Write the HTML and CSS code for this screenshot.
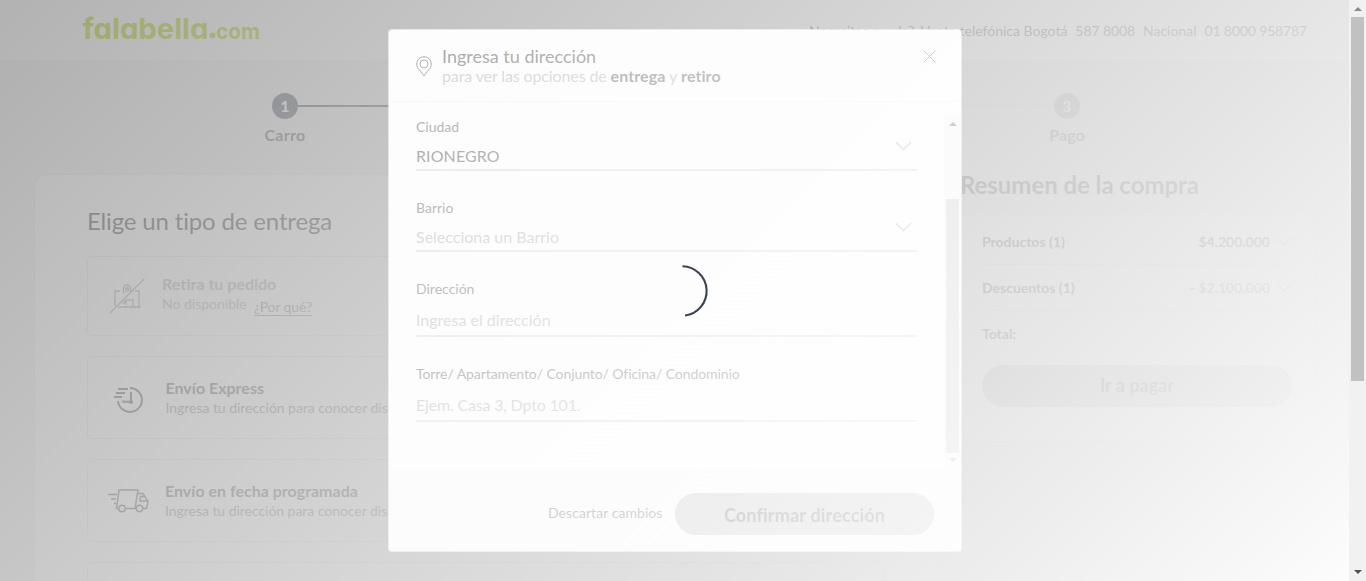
FILE: index.html
```html
<!DOCTYPE html>
<html lang="es">
<head>
<meta charset="utf-8">
<title>falabella.com</title>
<link rel="stylesheet" href="styles.css">
</head>
<body>
<div class="viewport">
  <header class="topbar">
    <svg class="logo" width="180" height="32" viewBox="0 0 180 32">
      <text class="logo-main" x="0.500" y="24.700" textLength="126" lengthAdjust="spacingAndGlyphs">falabella</text>
      <circle cx="130.500" cy="21.500" r="3"/>
      <text class="logo-com" x="134" y="24.700" textLength="44" lengthAdjust="spacingAndGlyphs">com</text>
    </svg>
    <div class="help"><span class="ask">¿Necesitas ayuda?</span><span class="tel">Venta telefónica Bogotá</span><b class="n1">587 8008</b><span class="nac">Nacional</span><b class="n2">01 8000 958787</b></div>
  </header>
  <div class="steps">
    <div class="step"><i>1</i><span>Carro</span></div>
    <div class="track"></div>
    <div class="track next"></div>
    <div class="step off"><i>3</i><span>Pago</span></div>
  </div>
  <div class="columns">
    <main class="delivery">
      <h1><span>Elige un tipo de entrega</span></h1>
      <section class="option off">
        <svg class="ic-store" width="36" height="36" viewBox="0 0 36 36"><path d="M11 13H6v15M9 29h23M26 13h4v16M14 26l3-4h7v7M17 22v5M15 15c-2-4 0-8 3-8s5 4 3 8l-3 3M1 35L35 1"/><circle cx="18" cy="11.500" r="1.500"/></svg>
        <div class="copy"><h2><span>Retira tu pedido</span></h2><p><span class="nd">No disponible</span><u>¿Por qué?</u></p></div>
      </section>
      <section class="option express">
        <svg class="ic-clock" width="32" height="30" viewBox="0 0 32 30"><path d="M16 3a12 12 0 1 1-12 13M4 4h10M2 8h9M0 12h8M17 7v10L8 16.500"/><circle cx="17" cy="17" r="1"/></svg>
        <div class="copy"><h2><span class="t-exp">Envío Express</span></h2><p class="line">Ingresa tu dirección para conocer dis</p></div>
      </section>
      <section class="option sched">
        <svg class="ic-truck" width="41" height="24" viewBox="0 0 41 24"><path d="M10 19.500H8.500L11 1h19l-3 18.500H18M30 4.500h5l5 8-1.500 7H35M27 19.500h1.500M32 8v4h8M37 7.500l-5 0M0 5.500h9M3 10h5M6 14.500h2"/><circle cx="14" cy="19.500" r="3.200"/><circle cx="31.500" cy="19.500" r="3.200"/></svg>
        <div class="copy"><h2><span class="t-sch">Envío en fecha programada</span></h2><p class="line">Ingresa tu dirección para conocer dis</p></div>
      </section>
      <section class="option"></section>
    </main>
    <aside class="summary">
      <h3>Resumen de la compra</h3>
      <div class="card">
        <div class="row"><span>Productos (1)</span><span class="amount">$4.200.000</span><svg width="16" height="10" viewBox="0 0 16 10"><path d="M1 1l7 7 7-7"/></svg></div>
        <div class="row"><span>Descuentos (1)</span><span class="amount">- <em>$2.100.000</em></span><svg width="16" height="10" viewBox="0 0 16 10"><path d="M1 1l7 7 7-7"/></svg></div>
        <div class="row total"><span>Total:</span></div>
        <div class="pay">Ir a pagar</div>
      </div>
    </aside>
  </div>

  <div class="shade"></div>
  <div class="modal">
    <div class="modal-head">
      <svg class="pin" width="16" height="21" viewBox="0 0 16 21"><path d="M8 20C6 16 .7 12.500.7 8a7.300 7.300 0 0 1 14.600 0C15.300 12.500 10 16 8 20z"/><circle cx="8" cy="8" r="4"/></svg>
      <div class="head-copy"><div class="title">Ingresa tu dirección</div><div class="sub"><span class="lead">para ver las opciones de </span><b>entrega</b> y <b>retiro</b></div></div>
      <svg class="close" width="13" height="13" viewBox="0 0 13 13"><path d="M.5.5l12 12M12.500.5l-12 12"/></svg>
    </div>
    <div class="modal-body">
      <div class="fields">
        <div class="field"><label>Ciudad</label><div class="value"><span class="city">RIONEGRO</span><svg width="17" height="10" viewBox="0 0 17 10"><path d="M.8 1l7.700 7.500L16.200 1"/></svg></div></div>
        <div class="field"><label>Barrio</label><div class="value hint"><span>Selecciona un Barrio</span><svg width="17" height="10" viewBox="0 0 17 10"><path d="M.8 1l7.700 7.500L16.200 1"/></svg></div></div>
        <div class="field tall"><label>Dirección</label><div class="value hint"><span>Ingresa el dirección</span></div></div>
        <div class="field tall"><label class="long">Torre/ Apartamento/ Conjunto/ Oficina/ Condominio</label><div class="value hint"><span class="example">Ejem. Casa 3, Dpto 101.</span></div></div>
      </div>
      <div class="bar inner"><i class="up"></i><div class="thumb"></div><i class="down"></i></div>
    </div>
    <div class="modal-foot"><span class="discard">Descartar cambios</span><div class="confirm">Confirmar dirección</div></div>
  </div>
  <div class="veil"></div>
  <svg class="spinner" width="54" height="54" viewBox="0 0 54 54"><path d="M25.500 2.300A24.700 24.700 0 0 1 28 51.500"/></svg>
</div>
<div class="bar outer"><i class="up"></i><div class="thumb"></div><i class="down"></i></div>
</body>
</html>
```
FILE: styles.css
```css
* { box-sizing: border-box; }
body { margin: 0; display: flex; width: 1366px; height: 581px; overflow: hidden; font-family: Lato, "Open Sans", sans-serif; color: #333; }
h1, h2, h3, p { margin: 0; font-weight: 400; }
i, em { font-style: normal; }
svg { display: block; flex: none; fill: none; stroke: #444; }
span, b { white-space: nowrap; }

.viewport { position: relative; width: 1349px; height: 581px; overflow: hidden; background: #f3f3f3; }

/* Top bar */
.topbar { height: 60px; background: #fff; display: flex; justify-content: space-between; align-items: flex-start; padding: 14px 42px 0 82px; }
.logo { fill: #aad500; stroke: none; overflow: visible; }
.logo-main, .logo-com { font-family: Inter, "DejaVu Sans", sans-serif; font-weight: 700; font-feature-settings: "cv11"; }
.logo-main { font-size: 29px; }
.logo-com { font-size: 22px; }
.help { display: flex; padding-top: 7px; font-size: 14px; line-height: 20px; }
.help b { font-weight: 400; }
.tel { margin-left: 6px; }
.n1, .nac, .n2 { margin-left: 8px; }
.n1 { letter-spacing: -.1px; }
.n2 { letter-spacing: -.15px; }
.nac { color: #444; }

/* Progress */
.steps { display: flex; height: 115px; padding: 33px 252px 0 255px; }
.step { width: 60px; display: flex; flex-direction: column; align-items: center; font-size: 16px; font-weight: 700; line-height: 20px; letter-spacing: .3px; color: #5c5c5c; }
.step i { width: 26px; height: 26px; border-radius: 50%; background: #46505a; color: #fff; text-align: center; line-height: 26px; margin-bottom: 6px; }
.step.off { color: #777; letter-spacing: 0; }
.step.off i { background: #aaa; }
.track { flex: 1; height: 2px; margin: 12px -17px 0; background: #46505a; }
.track.next { margin-left: 17px; background: #e6e6e6; }

/* Delivery options */
.columns { display: flex; }
.delivery { width: 902px; margin-left: 35px; height: 420px; border-radius: 12px 12px 0 0; background: #fff; padding: 29px 52px 0; box-shadow: 0 0 3px rgba(0,0,0,.08); }
h1 { font-size: 24px; line-height: 34px; margin-bottom: 18px; letter-spacing: -.16px; font-variant-ligatures: none; }
.option { display: flex; height: 83px; border: 1px solid #e4e4e4; border-radius: 5px; margin-bottom: 20px; padding: 21px 0 0 23px; }
.option.off { height: 80px; padding-top: 17px; }
.option h2 { font-size: 16px; line-height: 20px; font-weight: 700; color: #505050; }
.option p { font-size: 14px; line-height: 20px; color: #777; white-space: nowrap; }
.option.off h2, .option.off p { color: #aaa; }
.off u { text-decoration: none; border-bottom: 1px solid #888; color: #888; margin-left: 7px; display: inline-block; line-height: 17px; letter-spacing: -.1px; position: relative; top: 3px; }
.ic-store { margin: 4px 17px 0 -2px; stroke: #999; stroke-width: 1.3; }
.ic-clock { margin: 7px 19.5px 0 3px; stroke-width: 2; }
.ic-truck { margin: 8px 16px 0 -3px; stroke-width: 1.4; }
.line { letter-spacing: -.04px; }

/* Summary */
.summary { margin-left: 23px; width: 355px; }
h3 { font-size: 24px; line-height: 30px; font-weight: 700; margin-top: -5px; letter-spacing: -.05px; color: #444; }
.card { height: 226px; margin-top: 15px; margin-left: -1px; border-radius: 10px; background: #fff; padding: 4px 21px 0 23px; box-shadow: 0 1px 2px rgba(0,0,0,.12); }
.row { display: flex; align-items: center; height: 46px; border-bottom: 1px solid #e3e3e3; font-size: 14px; font-weight: 700; color: #333; }
.row .amount { margin-left: auto; }
.row em { color: #4f9a3a; }
.row svg { stroke: #777; margin: 0 2px 0 6px; }
.row.total { border: 0; height: 44px; }
.pay { width: 310px; height: 42px; margin-top: 10px; border-radius: 21px; background: #bbb; color: #333; font-size: 18px; line-height: 41px; font-weight: 700; text-align: center; }

/* Layers */
.shade { position: absolute; inset: 0; background: rgba(0,0,0,.5); }
.veil { position: absolute; inset: 0; background: linear-gradient(135deg, rgba(255,255,255,.4), rgba(255,255,255,.98)); }
.spinner { position: absolute; left: 656.5px; top: 264px; stroke: #3a4450; stroke-width: 2.1; }

/* Address dialog */
.modal { position: absolute; left: 388px; top: 29px; width: 574px; height: 523px; border: 1px solid rgba(253,253,253,.6); background-clip: padding-box; border-radius: 4px; background-color: #fafafa; overflow: hidden; }
.modal-head { display: flex; height: 72px; padding: 16px 25px 0 27px; border-bottom: 1px solid #eee; }
.pin { margin: 10px 10px 0 0; stroke: #555; stroke-width: 1; }
.title { font-size: 18px; line-height: 20px; color: #444; }
.sub { font-size: 16px; line-height: 20px; color: #aaa; white-space: pre; }
.lead { letter-spacing: -.12px; white-space: pre; }
.sub b { color: #555; letter-spacing: .08px; }
.close { margin: 4px 0 0 auto; stroke: #5f4a3f; stroke-width: .9; }
.modal-body { display: flex; justify-content: space-between; height: 367px; padding: 13px 0 0 27px; }
.fields { width: 501px; padding-top: 2px; }
.field { height: 54px; margin-bottom: 27px; border-bottom: 2px solid #d5d5d5; }
.field.tall { height: 58px; }
label { display: block; font-size: 14px; line-height: 20px; color: #555; white-space: nowrap; }
.long { letter-spacing: -.08px; }
.city { letter-spacing: .1px; }
.value { display: flex; justify-content: space-between; margin-top: 9px; padding-right: 5px; font-size: 16px; line-height: 20px; color: #444; }
.tall .value { margin-top: 11px; }
.value.hint { color: #aaa; }
.example { letter-spacing: -.18px; }
.value svg { margin-top: -5px; stroke: #aaa; stroke-width: 1.3; }
.modal-foot { display: flex; height: 82px; padding: 24px 27px 0 159px; background: #f5f5f5; }
.discard { width: 127px; font-size: 14px; line-height: 40px; letter-spacing: .06px; color: #555; }
.confirm { width: 259px; height: 42px; border-radius: 21px; background: #bbb; color: #555; text-align: center; font-size: 18px; line-height: 45px; letter-spacing: .18px; font-weight: 700; }

/* Scrollbars */
.bar { width: 17px; background: #f1f1f1; display: flex; flex-direction: column; align-items: center; }
.bar .thumb { width: 13px; background: #c1c1c1; }
.bar i { width: 0; height: 0; border: 4px solid transparent; }
.bar .up { border-top: 0; border-bottom-color: #505050; }
.bar .down { border-bottom: 0; border-top-color: #505050; margin-top: auto; }
.inner { height: 354px; padding: 7px 0 7px; }
.inner .thumb { height: 254px; margin-top: 73px; }
.inner .down { border-top-color: #a3a3a3; }
.outer { height: 581px; padding: 7px 0 7px; }
.outer .thumb { height: 364px; margin-top: 6px; }
.outer .up { border-bottom-color: #8b8b8b; }
```
